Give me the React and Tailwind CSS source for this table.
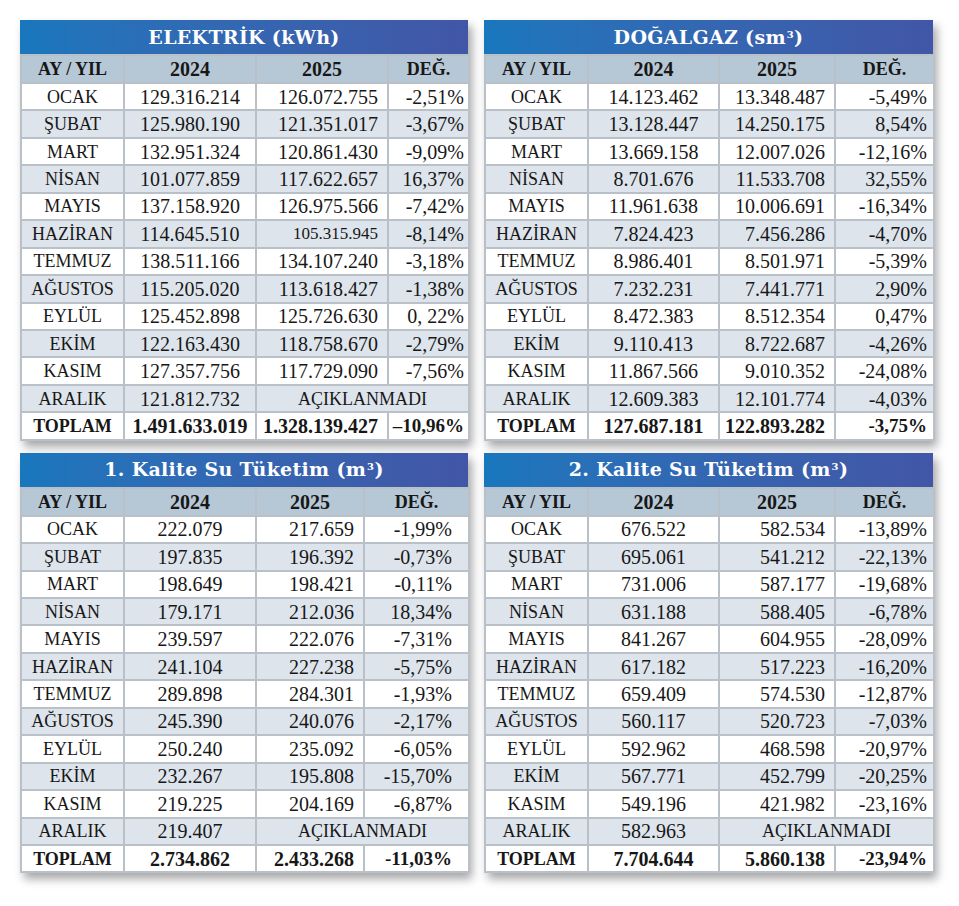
const elektrik = [
  ['OCAK', '129.316.214', '126.072.755', '-2,51%'],
  ['ŞUBAT', '125.980.190', '121.351.017', '-3,67%'],
  ['MART', '132.951.324', '120.861.430', '-9,09%'],
  ['NİSAN', '101.077.859', '117.622.657', '16,37%'],
  ['MAYIS', '137.158.920', '126.975.566', '-7,42%'],
  ['HAZİRAN', '114.645.510', '105.315.945', '-8,14%', true],
  ['TEMMUZ', '138.511.166', '134.107.240', '-3,18%'],
  ['AĞUSTOS', '115.205.020', '113.618.427', '-1,38%'],
  ['EYLÜL', '125.452.898', '125.726.630', '0, 22%'],
  ['EKİM', '122.163.430', '118.758.670', '-2,79%'],
  ['KASIM', '127.357.756', '117.729.090', '-7,56%'],
  ['ARALIK', '121.812.732', null, null],
];

const dogalgaz = [
  ['OCAK', '14.123.462', '13.348.487', '-5,49%'],
  ['ŞUBAT', '13.128.447', '14.250.175', '8,54%'],
  ['MART', '13.669.158', '12.007.026', '-12,16%'],
  ['NİSAN', '8.701.676', '11.533.708', '32,55%'],
  ['MAYIS', '11.961.638', '10.006.691', '-16,34%'],
  ['HAZİRAN', '7.824.423', '7.456.286', '-4,70%'],
  ['TEMMUZ', '8.986.401', '8.501.971', '-5,39%'],
  ['AĞUSTOS', '7.232.231', '7.441.771', '2,90%'],
  ['EYLÜL', '8.472.383', '8.512.354', '0,47%'],
  ['EKİM', '9.110.413', '8.722.687', '-4,26%'],
  ['KASIM', '11.867.566', '9.010.352', '-24,08%'],
  ['ARALIK', '12.609.383', '12.101.774', '-4,03%'],
];

const su1 = [
  ['OCAK', '222.079', '217.659', '-1,99%'],
  ['ŞUBAT', '197.835', '196.392', '-0,73%'],
  ['MART', '198.649', '198.421', '-0,11%'],
  ['NİSAN', '179.171', '212.036', '18,34%'],
  ['MAYIS', '239.597', '222.076', '-7,31%'],
  ['HAZİRAN', '241.104', '227.238', '-5,75%'],
  ['TEMMUZ', '289.898', '284.301', '-1,93%'],
  ['AĞUSTOS', '245.390', '240.076', '-2,17%'],
  ['EYLÜL', '250.240', '235.092', '-6,05%'],
  ['EKİM', '232.267', '195.808', '-15,70%'],
  ['KASIM', '219.225', '204.169', '-6,87%'],
  ['ARALIK', '219.407', null, null],
];

const su2 = [
  ['OCAK', '676.522', '582.534', '-13,89%'],
  ['ŞUBAT', '695.061', '541.212', '-22,13%'],
  ['MART', '731.006', '587.177', '-19,68%'],
  ['NİSAN', '631.188', '588.405', '-6,78%'],
  ['MAYIS', '841.267', '604.955', '-28,09%'],
  ['HAZİRAN', '617.182', '517.223', '-16,20%'],
  ['TEMMUZ', '659.409', '574.530', '-12,87%'],
  ['AĞUSTOS', '560.117', '520.723', '-7,03%'],
  ['EYLÜL', '592.962', '468.598', '-20,97%'],
  ['EKİM', '567.771', '452.799', '-20,25%'],
  ['KASIM', '549.196', '421.982', '-23,16%'],
  ['ARALIK', '582.963', null, null],
];

const cell = 'border-2 border-[#b9c0c7] p-0 whitespace-nowrap leading-[22px]';

function DataTable({ title, widths, rows, total, degPad }) {
  return (
    <div className="w-full shadow-[4px_6px_9px_rgba(0,0,0,0.35)] bg-white">
      <div className="h-[34px] flex items-center justify-center bg-gradient-to-r from-[#1877bd] to-[#4156a6] text-white text-[19px] font-bold tracking-[0.3px] font-['DejaVu_Serif',serif]">
        {title}
      </div>
      <table className="w-full table-fixed border-collapse font-['Liberation_Serif',serif] text-[#171717]">
        <colgroup>
          {widths.map((w, i) => (
            <col key={i} style={{ width: w }} />
          ))}
        </colgroup>
        <thead>
          <tr className="h-[28px] bg-[#b6c8d5] font-bold text-[18px]">
            <th className={`${cell} text-center`}>AY / YIL</th>
            <th className={`${cell} text-center text-[20px]`}>2024</th>
            <th className={`${cell} text-center text-[20px]`}>2025</th>
            <th className={`${cell} text-center`}>DEĞ.</th>
          </tr>
        </thead>
        <tbody>
          {rows.map((r, i) => (
            <tr key={r[0]} className={`h-[27.45px] ${i % 2 === 1 ? 'bg-[#dde4eb]' : 'bg-white'}`}>
              <td className={`${cell} text-center text-[18px]`}>{r[0]}</td>
              <td className={`${cell} text-center text-[20px]`}>{r[1]}</td>
              {r[2] === null ? (
                <td colSpan={2} className={`${cell} text-center text-[18px]`}>
                  AÇIKLANMADI
                </td>
              ) : (
                <>
                  <td className={`${cell} text-right pr-[9px] ${r[4] ? 'text-[17px]' : 'text-[20px]'}`}>{r[2]}</td>
                  <td className={`${cell} text-right text-[20px] ${degPad}`}>{r[3]}</td>
                </>
              )}
            </tr>
          ))}
          <tr className="h-[27.45px] bg-white font-bold">
            <td className={`${cell} text-center text-[18px]`}>TOPLAM</td>
            <td className={`${cell} text-center text-[20px]`}>{total[0]}</td>
            <td className={`${cell} text-right pr-[9px] text-[20px]`}>{total[1]}</td>
            <td className={`${cell} text-right text-[19px] ${degPad}`}>{total[2]}</td>
          </tr>
        </tbody>
      </table>
    </div>
  );
}

function Cube() {
  return <sup className="text-[10px] relative -top-[6px] ml-[1px]">3</sup>;
}

export default function App() {
  const leftTop = ['103px', '132px', '132px', '81px'];
  const leftBottom = ['103px', '132px', '108px', '105px'];
  const right = ['103px', '131px', '116px', '99px'];

  return (
    <div className="w-[959px] h-[906px] bg-white pt-[20px] pl-[20px]">
      <div className="grid grid-cols-[448px_449px] gap-x-[16px] gap-y-[12px]">
        <DataTable
          title="ELEKTRİK (kWh)"
          widths={leftTop}
          rows={elektrik}
          total={['1.491.633.019', '1.328.139.427', '–10,96%']}
          degPad="pr-[4px]"
        />
        <DataTable
          title={
            <span>
              DOĞALGAZ (sm<Cube />)
            </span>
          }
          widths={right}
          rows={dogalgaz}
          total={['127.687.181', '122.893.282', '-3,75%']}
          degPad="pr-[6px]"
        />
        <DataTable
          title={
            <span>
              1. Kalite Su Tüketim (m<Cube />)
            </span>
          }
          widths={leftBottom}
          rows={su1}
          total={['2.734.862', '2.433.268', '-11,03%']}
          degPad="pr-[16px]"
        />
        <DataTable
          title={
            <span>
              2. Kalite Su Tüketim (m<Cube />)
            </span>
          }
          widths={right}
          rows={su2}
          total={['7.704.644', '5.860.138', '-23,94%']}
          degPad="pr-[6px]"
        />
      </div>
    </div>
  );
}
